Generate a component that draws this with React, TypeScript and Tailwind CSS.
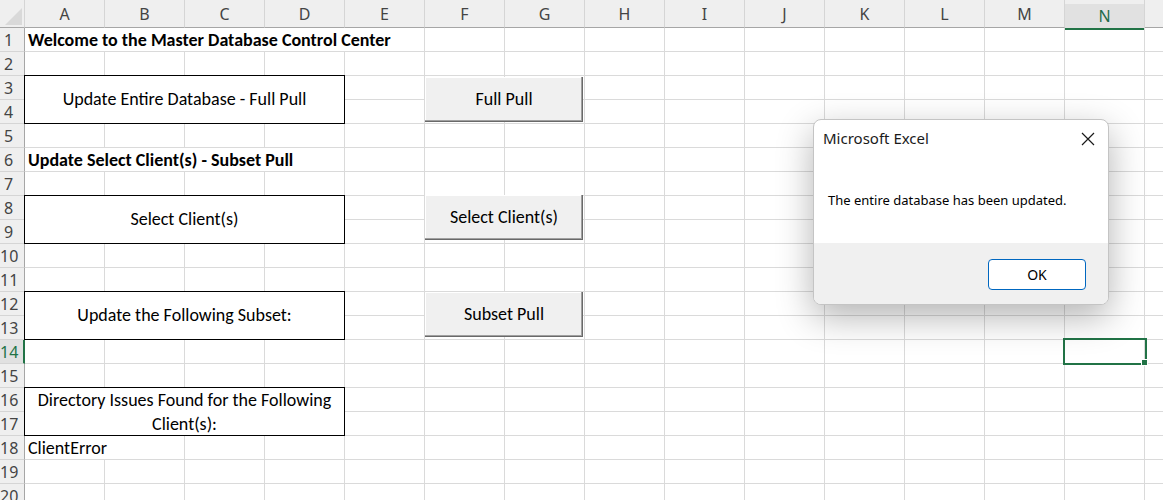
import React from 'react';

const COLS = ['A', 'B', 'C', 'D', 'E', 'F', 'G', 'H', 'I', 'J', 'K', 'L', 'M', 'N', 'O'];
const ROWS = Array.from({ length: 20 }, (_, i) => i + 1);

// columns (0 = A) hidden under merged / overflowing text per row
const covered: Record<number, number[]> = {
  1: [0, 1, 2, 3, 4],
  3: [0, 1, 2, 3],
  4: [0, 1, 2, 3],
  6: [0, 1, 2, 3],
  8: [0, 1, 2, 3],
  9: [0, 1, 2, 3],
  12: [0, 1, 2, 3],
  13: [0, 1, 2, 3],
  16: [0, 1, 2, 3],
  17: [0, 1, 2, 3],
  18: [0, 1],
};

const cellFont = "font-['Carlito','Calibri','Lato',sans-serif]";
const uiFont = "font-['Segoe_UI','Noto_Sans',sans-serif]";

function SheetButton({ className, label }: { className: string; label: string }) {
  return (
    <div
      className={`absolute left-[425px] w-[158px] h-[45px] bg-[#f0f0f0] flex items-center justify-center text-[18px] text-black shadow-[inset_-1px_-1px_0_#696969,inset_-2px_-2px_0_#a0a0a0,inset_1px_1px_0_#ffffff] ${cellFont} ${className}`}
    >
      {label}
    </div>
  );
}

export default function App() {
  return (
    <div className={`relative w-[1163px] h-[500px] overflow-hidden bg-white ${cellFont}`}>
      <div className="grid grid-cols-[25px_repeat(15,80px)] grid-rows-[28px_repeat(20,24px)]">
        {/* corner */}
        <div className="bg-[#efefef] border-r border-b border-r-[#d5d5d5] border-b-[#a6a6a6]">
          <svg width="24" height="27" viewBox="0 0 24 27">
            <polygon points="22,8 22,25 5,25" fill="#d9d9d9" />
          </svg>
        </div>
        {/* column headers */}
        {COLS.map((c) =>
          c === 'N' ? (
            <div key={c} className="flex flex-col bg-[#efefef] border-r border-[#d5d5d5]">
              <div className={`mt-1 flex-1 flex items-center justify-center bg-[#e1e1e1] border-b-2 border-[#217346] text-[16px] text-[#1e6b4c] ${uiFont}`}>
                {c}
              </div>
            </div>
          ) : (
            <div
              key={c}
              className={`flex items-center justify-center bg-[#efefef] border-r border-b border-r-[#d5d5d5] border-b-[#a6a6a6] text-[16px] text-[#444] ${uiFont}`}
            >
              {c === 'O' ? '' : c}
            </div>
          )
        )}

        {ROWS.map((r) => (
          <React.Fragment key={r}>
            {r === 14 ? (
              <div className={`flex items-center bg-[#e1e1e1] border-r-2 border-b border-r-[#217346] border-b-[#d5d5d5] text-[16px] text-[#217346] ${uiFont}`}>
                <span className="w-[17px] text-center">{r}</span>
              </div>
            ) : (
              <div className={`flex items-center bg-[#efefef] border-r border-b border-r-[#a6a6a6] border-b-[#d5d5d5] text-[16px] text-[#444] ${uiFont}`}>
                <span className="w-[17px] text-center">{r}</span>
              </div>
            )}
            {COLS.map((c, i) =>
              covered[r]?.includes(i) ? null : (
                <div key={c} className="border-r border-b border-[#dadada]" />
              )
            )}
          </React.Fragment>
        ))}

        {/* overflowing text rows */}
        <div className="col-start-2 col-span-5 row-start-2 flex items-center pl-[3px] pt-px whitespace-nowrap border-r border-b border-[#dadada] text-[18px] font-bold text-black">
          Welcome to the Master Database Control Center
        </div>
        <div className="col-start-2 col-span-4 row-start-7 flex items-center pl-[3px] pt-px whitespace-nowrap border-r border-b border-[#dadada] text-[18px] font-bold text-black">
          Update Select Client(s) - Subset Pull
        </div>
        <div className="col-start-2 col-span-2 row-start-19 flex items-center pl-[3px] pt-px whitespace-nowrap border-r border-b border-[#dadada] text-[18px] text-black">
          ClientError
        </div>

        {/* bordered merged boxes */}
        <div className="relative z-10 -mt-px -ml-px col-start-2 col-span-4 row-start-4 row-span-2 flex items-center justify-center border border-black text-[18px] text-black">
          Update Entire Database - Full Pull
        </div>
        <div className="relative z-10 -mt-px -ml-px col-start-2 col-span-4 row-start-9 row-span-2 flex items-center justify-center border border-black text-[18px] text-black">
          Select Client(s)
        </div>
        <div className="relative z-10 -mt-px -ml-px col-start-2 col-span-4 row-start-13 row-span-2 flex items-center justify-center border border-black text-[18px] text-black">
          Update the Following Subset:
        </div>
        <div className="relative z-10 -mt-px -ml-px col-start-2 col-span-4 row-start-17 row-span-2 flex items-center justify-center border border-black px-2 text-center text-[18px] leading-[24px] text-black">
          Directory Issues Found for the Following Client(s):
        </div>
      </div>

      {/* form buttons on the sheet */}
      <SheetButton className="top-[77px]" label="Full Pull" />
      <SheetButton className="top-[195px]" label="Select Client(s)" />
      <SheetButton className="top-[292px]" label="Subset Pull" />

      {/* active cell N14 */}
      <div className="absolute left-[1063px] top-[338px] w-[84px] h-[27px] border-2 border-[#217346]" />
      <div className="absolute left-[1141px] top-[359px] w-[7px] h-[7px] bg-[#217346] border border-white" />

      {/* message box */}
      <div className={`absolute left-[813px] top-[119px] w-[296px] h-[186px] flex flex-col overflow-hidden rounded-lg border border-[#c4c4c4] bg-white shadow-[0_12px_36px_rgba(0,0,0,0.3)] ${uiFont}`}>
        <div className="h-[123px] flex flex-col">
          <div className="h-[36px] flex items-center justify-between pl-[9px] pr-[13px]">
            <span className="text-[15px] text-[#1a1a1a]">Microsoft Excel</span>
            <svg width="14" height="14" viewBox="0 0 14 14" className="mt-[2px]">
              <path d="M1 1 L13 13 M13 1 L1 13" stroke="#1a1a1a" strokeWidth="1.2" fill="none" />
            </svg>
          </div>
          <div className="pt-[34px] pl-[14px] text-[13px] leading-[20px] text-black">
            The entire database has been updated.
          </div>
        </div>
        <div className="flex-1 bg-[#f0f0f0] flex justify-end items-start pt-[16px] pr-[22px]">
          <div className="w-[98px] h-[31px] flex items-center justify-center rounded-[4px] border border-[#0067c0] bg-white text-[14px] text-black">
            OK
          </div>
        </div>
      </div>
    </div>
  );
}
